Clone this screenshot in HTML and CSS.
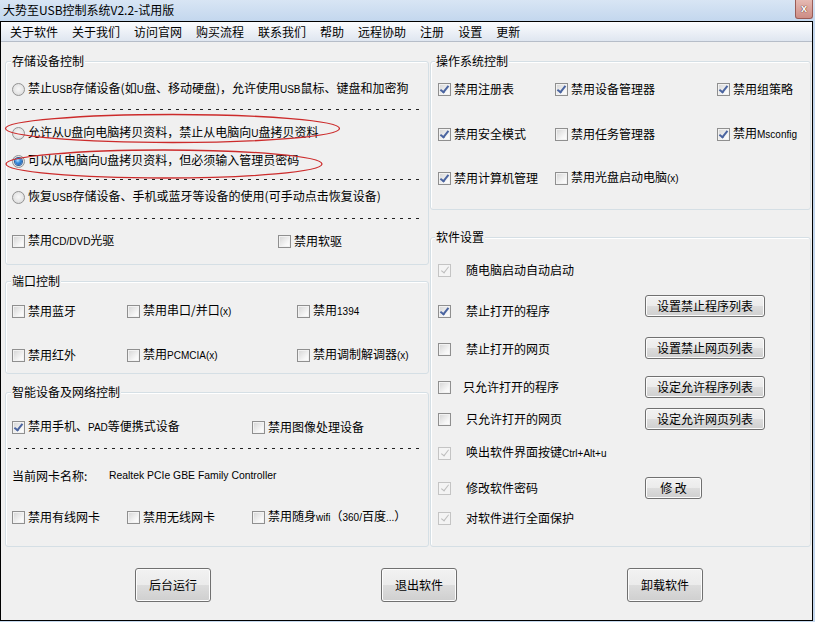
FILE: index.html
```html
<!DOCTYPE html>
<html lang="zh-CN">
<head>
<meta charset="utf-8">
<title>大势至USB控制系统V2.2-试用版</title>
<link rel="stylesheet" href="styles.css">
</head>
<body>
<div class="titlebar">
  <div class="title">大势至USB控制系统V2.2-试用版</div>
  <div class="close">x</div>
</div>
<div class="frame">
  <nav class="menubar">
    <span>关于软件</span><span>关于我们</span><span>访问官网</span><span>购买流程</span><span>联系我们</span><span>帮助</span><span>远程协助</span><span>注册</span><span>设置</span><span>更新</span>
  </nav>
  <div class="content">
    <div class="col col-left">
      <section class="group g1">
        <div class="group-title">存储设备控制</div>
        <div class="row mt11"><span class="radio"></span><span>禁止<span class="en">USB</span>存储设备(如<span class="en">U</span>盘、移动硬盘)，允许使用<span class="en">USB</span>鼠标、键盘和加密狗</span></div>
        <div class="dash mt10"></div>
        <div class="row mt13"><span class="radio"></span><span>允许从<span class="en">U</span>盘向电脑拷贝资料，禁止从电脑向<span class="en">U</span>盘拷贝资料</span></div>
        <div class="row mt8"><span class="radio on"></span><span>可以从电脑向<span class="en">U</span>盘拷贝资料，但必须输入管理员密码</span></div>
        <div class="dash mt8"></div>
        <div class="row mt7"><span class="radio"></span><span>恢复<span class="en">USB</span>存储设备、手机或蓝牙等设备的使用(可手动点击恢复设备)</span></div>
        <div class="dash mt11"></div>
        <div class="row mt12">
          <div class="cell w266"><span class="cb"></span><span>禁用<span class="en">CD/DVD</span>光驱</span></div>
          <div class="cell"><span class="cb"></span><span>禁用软驱</span></div>
        </div>
        <svg class="marks" width="350" height="75" viewBox="0 0 350 75">
          <ellipse cx="172.5" cy="18.5" rx="167" ry="14" />
          <ellipse cx="164" cy="54" rx="158" ry="14" />
        </svg>
      </section>
      <section class="group g2">
        <div class="group-title">端口控制</div>
        <div class="row mt13">
          <div class="cell w115"><span class="cb"></span><span>禁用蓝牙</span></div>
          <div class="cell w170"><span class="cb"></span><span>禁用串口/并口<span class="en">(x)</span></span></div>
          <div class="cell"><span class="cb"></span><span>禁用<span class="en">1394</span></span></div>
        </div>
        <div class="row mt24">
          <div class="cell w115"><span class="cb"></span><span>禁用红外</span></div>
          <div class="cell w170"><span class="cb"></span><span>禁用<span class="en">PCMCIA(x)</span></span></div>
          <div class="cell"><span class="cb"></span><span>禁用调制解调器<span class="en">(x)</span></span></div>
        </div>
      </section>
      <section class="group g3">
        <div class="group-title">智能设备及网络控制</div>
        <div class="row mt18">
          <div class="cell w240"><span class="cb on"></span><span>禁用手机、<span class="en">PAD</span>等便携式设备</span></div>
          <div class="cell"><span class="cb"></span><span>禁用图像处理设备</span></div>
        </div>
        <div class="dash mt11"></div>
        <div class="row mt17">
          <span class="nic-label">当前网卡名称:</span><span class="en nic">Realtek PCIe GBE Family Controller</span>
        </div>
        <div class="row mt21">
          <div class="cell w115"><span class="cb"></span><span>禁用有线网卡</span></div>
          <div class="cell w125"><span class="cb"></span><span>禁用无线网卡</span></div>
          <div class="cell"><span class="cb"></span><span>禁用随身<span class="en">wifi</span>（<span class="en">360/</span>百度<span class="en">...</span>）</span></div>
        </div>
      </section>
    </div>
    <div class="col col-right">
      <section class="group ga">
        <div class="group-title">操作系统控制</div>
        <div class="row mt11">
          <div class="cell w117"><span class="cb on"></span><span>禁用注册表</span></div>
          <div class="cell w162"><span class="cb on"></span><span>禁用设备管理器</span></div>
          <div class="cell"><span class="cb on"></span><span>禁用组策略</span></div>
        </div>
        <div class="row mt25">
          <div class="cell w117"><span class="cb on"></span><span>禁用安全模式</span></div>
          <div class="cell w162"><span class="cb"></span><span>禁用任务管理器</span></div>
          <div class="cell"><span class="cb on"></span><span>禁用<span class="en">Msconfig</span></span></div>
        </div>
        <div class="row mt24">
          <div class="cell w117"><span class="cb on"></span><span>禁用计算机管理</span></div>
          <div class="cell w162"><span class="cb"></span><span>禁用光盘启动电脑<span class="en">(x)</span></span></div>
        </div>
      </section>
      <section class="group gb">
        <div class="group-title">软件设置</div>
        <div class="row mt16"><span class="cb on dis"></span><span class="opt">随电脑启动自动启动</span></div>
        <div class="row mt21"><span class="cb on"></span><span class="opt">禁止打开的程序</span><button class="btn up5">设置禁止程序列表</button></div>
        <div class="row mt18"><span class="cb"></span><span class="opt">禁止打开的网页</span><button class="btn up1">设置禁止网页列表</button></div>
        <div class="row mt18"><span class="cb"></span><span class="opt opt-l">只允许打开的程序</span><button class="btn">设定允许程序列表</button></div>
        <div class="row mt12"><span class="cb"></span><span class="opt">只允许打开的网页</span><button class="btn">设定允许网页列表</button></div>
        <div class="row mt14"><span class="cb on dis"></span><span class="opt">唤出软件界面按键<span class="en">Ctrl+Alt+u</span></span></div>
        <div class="row mt15"><span class="cb on dis"></span><span class="opt">修改软件密码</span><button class="btn btn-sm">修 改</button></div>
        <div class="row mt10"><span class="cb on dis"></span><span class="opt">对软件进行全面保护</span></div>
      </section>
    </div>
  </div>
  <div class="actions">
    <button class="btn big">后台运行</button>
    <button class="btn big">退出软件</button>
    <button class="btn big">卸载软件</button>
  </div>
</div>
</body>
</html>
```

FILE: styles.css
```css
* { box-sizing: border-box; margin: 0; padding: 0; }
html, body { width: 815px; height: 622px; overflow: hidden; }
body {
  background: #c4d7ed;
  font-family: "Noto Sans CJK SC", "Liberation Sans", sans-serif;
  font-size: 12px;
  line-height: 20px;
  color: #000;
}
.en { font-family: "Liberation Sans", sans-serif; font-size: 10px; }

.titlebar {
  height: 21px;
  display: flex;
  justify-content: space-between;
  align-items: flex-start;
  background: linear-gradient(#d8e5f4, #c3d7ee);
}
.title { padding-left: 3px; line-height: 20px; font-family: "Noto Sans CJK SC", "Liberation Sans", sans-serif; }
.close {
  width: 18px; height: 19px; margin-right: 2px;
  border: 1px solid #9a5c56; border-top: none;
  border-radius: 0 0 3px 3px;
  background: linear-gradient(#e6bab3, #cd8d85);
  color: #fff; font: bold 11px/17px "Liberation Sans", sans-serif;
  text-align: center;
  text-shadow: 0 0 1px #5e2a25, 0 0 1px #5e2a25;
}

.frame {
  width: 813px; height: 600px;
  border: 1px solid #000;
  background: #f0f0f0;
  display: flex; flex-direction: column;
}
.menubar {
  height: 20px; display: flex; padding-left: 2px;
  background: linear-gradient(#fbfcfe, #dfe6f0);
  border-bottom: 1px solid #b6bdc8;
}
.menubar span { padding: 0 7px; line-height: 20px; }

.content { display: flex; gap: 1px; padding: 0 1px 0 4px; }
.col { display: flex; flex-direction: column; }
.col-left { width: 424px; }
.col-right { width: 381px; }

.group {
  position: relative;
  border: 1px solid #d5dfe5;
  border-radius: 3px;
  box-shadow: inset 1px 1px 0 #fff;
  padding: 0 4px 0 6px;
}
.group-title {
  margin: -8px 0 0 -1px;
  height: 14px; line-height: 14px;
  padding: 0 1px;
  background: #f0f0f0;
  width: fit-content;
}
.col-right .group { padding-left: 7px; }
.col-right .group-title { margin-left: -3px; }

.g1 { margin-top: 19px; padding-bottom: 13px; }
.g2 { margin-top: 16px; padding-bottom: 8px; }
.g3 { margin-top: 18px; padding-bottom: 19px; }
.ga { margin-top: 19px; padding-bottom: 21px; }
.gb { margin-top: 27px; padding-bottom: 18px; }

.row { height: 20px; display: flex; align-items: center; white-space: nowrap; }
.cell { display: flex; align-items: center; }
.w115 { width: 115px; } .w117 { width: 117px; } .w125 { width: 125px; }
.w162 { width: 162px; } .w170 { width: 170px; } .w240 { width: 240px; } .w266 { width: 266px; }

.mt7 { margin-top: 7px; } .mt8 { margin-top: 8px; } .mt10 { margin-top: 10px; }
.mt11 { margin-top: 11px; } .mt12 { margin-top: 12px; } .mt13 { margin-top: 13px; }
.mt14 { margin-top: 14px; } .mt15 { margin-top: 15px; } .mt16 { margin-top: 16px; }
.mt17 { margin-top: 17px; } .mt18 { margin-top: 18px; } .mt21 { margin-top: 21px; }
.mt24 { margin-top: 24px; } .mt25 { margin-top: 25px; }

.dash {
  height: 1px; margin-left: -4px; margin-right: 2px;
  background: repeating-linear-gradient(to right, #222 0 3px, transparent 3px 8px);
}

.radio {
  flex: none;
  width: 13px; height: 13px; margin-right: 3px;
  border-radius: 50%;
  border: 1px solid #939393;
  background: radial-gradient(circle at 50% 45%, #f8f8f8 0, #e6e6e6 55%, #cfcfcf 100%);
  display: flex; align-items: center; justify-content: center;
}
.radio.on::after {
  content: ""; width: 7px; height: 7px; border-radius: 50%;
  background: radial-gradient(circle at 40% 35%, #b7e3ff 0, #3a8ee0 40%, #124f9a 100%);
  box-shadow: 0 0 0 1px #2c5f9e;
}

.cb {
  flex: none;
  width: 13px; height: 13px; margin-right: 3px;
  border: 1px solid #8f8f8f;
  background: linear-gradient(135deg, #d4d4d4, #f7f7f7 70%, #fff);
  box-shadow: inset 0 0 0 1px #f2f2f2;
  display: flex; align-items: center; justify-content: center;
}
.cb.on::after {
  content: ""; width: 3px; height: 7px; margin-top: -2px;
  border: solid #4a64a0; border-width: 0 2px 2px 0;
  transform: rotate(38deg);
}
.cb.dis { border-color: #c4c4c4; background: #f4f4f4; box-shadow: none; }
.cb.dis::after { border-color: #bdbdbd; border-width: 0 1.5px 1.5px 0; }

.opt { width: 179px; margin-left: 12px; }
.opt-l { margin-left: 9px; width: 182px; }

.nic-label { width: 97px; }
.nic { font-size: 10.4px; }

.marks { position: absolute; left: -6px; top: 48px; pointer-events: none; }
.marks ellipse { fill: none; stroke: #cc2b2b; stroke-width: 1.3; }

.btn {
  flex: none;
  width: 120px; height: 22px;
  font: 12px/18px "Noto Sans CJK SC", "Liberation Sans", sans-serif;
  color: #000;
  border: 1px solid #707070;
  border-radius: 3px;
  background: linear-gradient(#f2f2f2 0, #ebebeb 50%, #dddddd 50%, #cfcfcf 100%);
  box-shadow: inset 0 0 0 1px #fcfcfc;
}
.btn.up5 { margin-bottom: 10px; }
.btn.up1 { margin-bottom: 2px; }
.btn-sm { width: 57px; }
.actions { display: flex; gap: 170px; padding-left: 134px; margin-top: 21px; }
.btn.big { width: 76px; height: 34px; }
```
